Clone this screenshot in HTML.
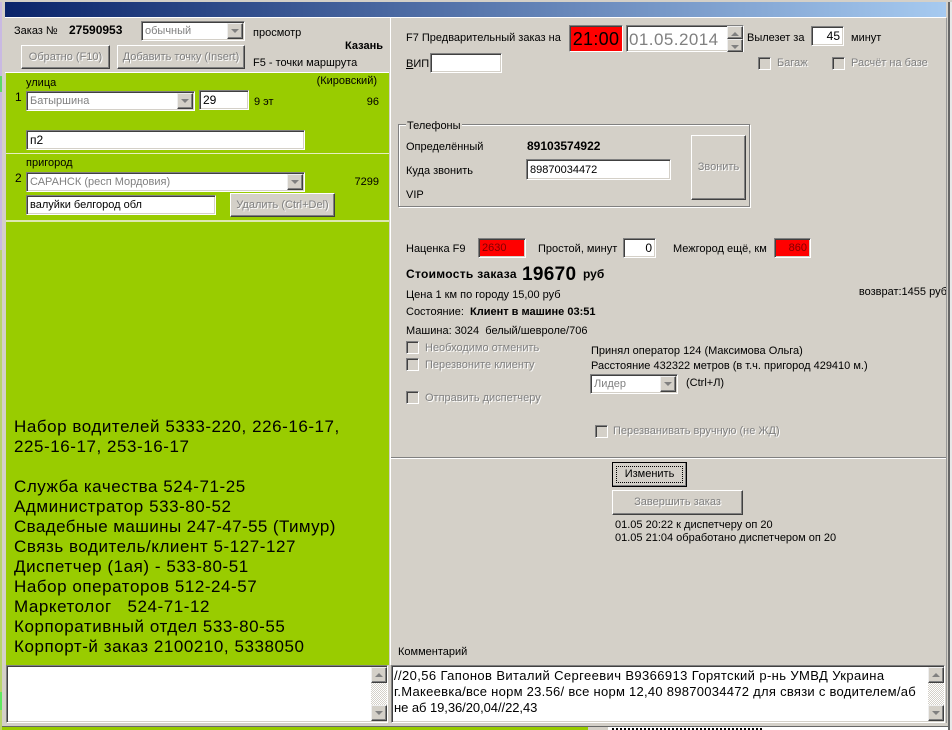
<!DOCTYPE html>
<html><head><meta charset="utf-8"><style>
html,body{margin:0;padding:0}
body{width:952px;height:730px;overflow:hidden;position:relative;background:#d4d0c8;font:11px/13px "Liberation Sans",sans-serif;color:#000}
div,span.t{position:absolute;box-sizing:border-box;white-space:nowrap}
.t{height:13px}
.b{font-weight:bold}
.d{color:#808080;text-shadow:1px 1px 0 #fff}
.s{background:#fff;border:1px solid;border-color:#808080 #fff #fff #808080;box-shadow:inset 1px 1px 0 #404040,inset -1px -1px 0 #d4d0c8;padding:2px 3px;font-size:11px;line-height:14px}
.r{background:#d4d0c8;border:1px solid;border-color:#fff #404040 #404040 #fff;box-shadow:inset -1px -1px 0 #808080;text-align:center}
.g{background:#9c0;}
.ar{background:#d4d0c8;border:1px solid;border-color:#eee #404040 #404040 #eee;box-shadow:inset -1px -1px 0 #808080;width:16px;height:16px}
.ar:after{content:"";position:absolute;left:3px;top:5px;border:4px solid transparent;border-top:4px solid #808080;border-bottom:0}
.ar.u:after{border-top:0;border-bottom:4px solid #808080}
.c{width:13px;height:13px;border:1px solid;border-color:#808080 #fff #fff #808080;box-shadow:inset 1px 1px 0 #404040;background:#d4d0c8}
.big{left:14px;font-size:17px;line-height:20px;height:20px;letter-spacing:.55px}
.sb{background:repeating-conic-gradient(#d4d0c8 0 25%,#fff 0 50%) 0 0/2px 2px}
.cm{left:394px;font-size:13px;line-height:16px;height:16px}
</style></head><body>
<div style="left:0;top:0;width:2px;height:730px;background:#c9b9e2"></div>
<div style="left:0;top:76px;width:2px;height:16px;background:#5fd86a"></div>
<div style="left:0;top:250px;width:2px;height:480px;background:#b9d46a"></div>
<div style="left:0;top:692px;width:2px;height:18px;background:#5fe85f"></div>
<div style="left:950px;top:0;width:2px;height:730px;background:#e8e8e8"></div>
<div style="left:948px;top:0;width:2px;height:730px;background:#666"></div>
<div style="left:0;top:0;width:952px;height:2px;background:#d4d0c8"></div>
<div style="left:5px;top:2px;width:941px;height:15px;background:linear-gradient(90deg,#0a246a,#a6caf0)"></div>
<div style="left:5px;top:17px;width:941px;height:1px;background:#fff"></div>

<!-- left top -->
<span class="t" style="left:14px;top:25px">Заказ №</span>
<span class="t b" style="left:69px;top:24px;font-size:12px">27590953</span>
<div class="s d" style="left:141px;top:21px;width:104px;height:20px;padding-top:2px;text-shadow:none;font-size:11px">обычный<div class="ar" style="right:1px;top:1px"></div></div>
<span class="t" style="left:253px;top:27px">просмотр</span>
<span class="t b" style="right:569px;top:40px">Казань</span>
<div class="r d" style="left:21px;top:45px;width:89px;height:24px;line-height:22px">Обратно (F10)</div>
<div class="r d" style="left:117px;top:45px;width:128px;height:24px;line-height:22px">Добавить точку (Insert)</div>
<span class="t" style="left:253px;top:57px">F5 - точки маршрута</span>
<div style="left:5px;top:72px;width:384px;height:1px;background:#fff"></div>

<!-- green blocks -->
<div class="g" style="left:6px;top:73px;width:383px;height:80px"></div>
<div style="left:6px;top:153px;width:383px;height:1px;background:#e6efc0"></div>
<div class="g" style="left:6px;top:154px;width:383px;height:66px"></div>
<div style="left:6px;top:220px;width:383px;height:2px;background:#dde8b0"></div>
<div class="g" style="left:6px;top:222px;width:383px;height:443px"></div>

<span class="t" style="left:26px;top:77px">улица</span>
<span class="t" style="right:575px;top:75px">(Кировский)</span>
<span class="t" style="left:15px;top:91px;font-size:12px">1</span>
<div class="s d" style="left:26px;top:91px;width:169px;height:20px;text-shadow:none;font-size:11px">Батыршина<div class="ar" style="right:1px;top:1px"></div></div>
<div class="s" style="left:199px;top:90px;width:50px;height:20px;font-size:12px">29</div>
<span class="t" style="left:254px;top:96px">9 эт</span>
<span class="t" style="right:573px;top:96px">96</span>
<div class="s" style="left:26px;top:130px;width:279px;height:20px;font-size:12px">п2</div>

<span class="t" style="left:26px;top:157px">пригород</span>
<span class="t" style="left:15px;top:172px;font-size:12px">2</span>
<div class="s d" style="left:26px;top:172px;width:279px;height:20px;text-shadow:none;font-size:11px">САРАНСК (респ Мордовия)<div class="ar" style="right:1px;top:1px"></div></div>
<span class="t" style="right:573px;top:176px">7299</span>
<div class="s" style="left:26px;top:195px;width:190px;height:20px">валуйки белгород обл</div>
<div class="r d" style="left:230px;top:193px;width:105px;height:24px;line-height:22px">Удалить (Ctrl+Del)</div>

<span class="t big" style="top:417px">Набор водителей 5333-220, 226-16-17,</span>
<span class="t big" style="top:437px">225-16-17, 253-16-17</span>
<span class="t big" style="top:477px">Служба качества 524-71-25</span>
<span class="t big" style="top:497px">Администратор 533-80-52</span>
<span class="t big" style="top:517px;letter-spacing:.4px">Свадебные машины 247-47-55 (Тимур)</span>
<span class="t big" style="top:537px">Связь водитель/клиент 5-127-127</span>
<span class="t big" style="top:557px">Диспетчер (1ая) - 533-80-51</span>
<span class="t big" style="top:577px">Набор операторов 512-24-57</span>
<span class="t big" style="top:597px">Маркетолог &nbsp; 524-71-12</span>
<span class="t big" style="top:617px">Корпоративный отдел 533-80-55</span>
<span class="t big" style="top:637px">Корпорт-й заказ 2100210, 5338050</span>

<div class="s" style="left:6px;top:665px;width:382px;height:58px"></div>
<div class="sb" style="left:371px;top:668px;width:16px;height:52px"></div>
<div class="ar u" style="left:371px;top:667px"></div>
<div class="ar" style="left:371px;top:705px"></div>

<!-- right top -->
<span class="t" style="left:406px;top:32px">F7 Предварительный заказ на</span>
<div style="left:569px;top:25px;width:54px;height:27px;background:#f00;border:1px solid;border-color:#808080 #fff #fff #808080;box-shadow:inset 1px 1px 0 #404040;font-size:18px;line-height:26px;text-align:center;letter-spacing:.3px">21:00</div>
<div class="s" style="left:626px;top:25px;width:118px;height:27px;color:#808080;font-size:17px;line-height:21px;letter-spacing:.45px;padding:3px 2px">01.05.2014</div>
<div class="ar u" style="left:727px;top:26px;height:13px;width:16px"></div>
<div class="ar" style="left:727px;top:39px;height:13px;width:16px"></div>
<span class="t" style="left:747px;top:32px">Вылезет за</span>
<div class="s" style="left:811px;top:26px;width:33px;height:20px;text-align:right;font-size:12px">45</div>
<span class="t" style="left:851px;top:32px">минут</span>
<span class="t" style="left:406px;top:58px"><u>В</u>ИП</span>
<div class="s" style="left:430px;top:53px;width:72px;height:20px"></div>
<div class="c" style="left:758px;top:57px"></div>
<span class="t d" style="left:777px;top:57px">Багаж</span>
<div class="c" style="left:832px;top:57px"></div>
<span class="t d" style="left:851px;top:57px">Расчёт на базе</span>

<!-- phones -->
<div style="left:398px;top:124px;width:352px;height:83px;border:1px solid #808080;box-shadow:inset 1px 1px 0 #fff,1px 1px 0 #fff"></div>
<span class="t" style="left:406px;top:120px;background:#d4d0c8;padding:0 1px 0 1px">Телефоны</span>
<span class="t" style="left:406px;top:141px">Определённый</span>
<span class="t b" style="left:527px;top:140px;font-size:12px">89103574922</span>
<span class="t" style="left:406px;top:165px">Куда звонить</span>
<div class="s" style="left:526px;top:159px;width:145px;height:21px;padding-top:3px">89870034472</div>
<span class="t" style="left:406px;top:189px">VIP</span>
<div class="r d" style="left:691px;top:135px;width:55px;height:65px;line-height:62px">Звонить</div>

<!-- price -->
<span class="t" style="left:406px;top:243px">Наценка F9</span>
<div class="s" style="left:478px;top:238px;width:48px;height:20px;background:#f00;color:#800000;font-size:11px">2630</div>
<span class="t" style="left:538px;top:243px">Простой, минут</span>
<div class="s" style="left:623px;top:238px;width:33px;height:20px;text-align:right;font-size:12px">0</div>
<span class="t" style="left:673px;top:243px">Межгород ещё, км</span>
<div class="s" style="left:774px;top:238px;width:37px;height:20px;background:#f00;color:#800000;text-align:right;font-size:11px">860</div>
<span class="t b" style="left:406px;top:268px;font-size:12px;letter-spacing:.3px">Стоимость заказа</span>
<span class="t b" style="left:522px;top:264px;font-size:19px;line-height:21px;height:21px;letter-spacing:.3px">19670</span>
<span class="t b" style="left:583px;top:268px;font-size:12px">руб</span>
<span class="t" style="left:406px;top:289px">Цена 1 км по городу 15,00 руб</span>
<span class="t" style="right:5px;top:286px">возврат:1455 руб</span>
<span class="t" style="left:406px;top:306px">Состояние:</span>
<span class="t b" style="left:470px;top:306px">Клиент в машине 03:51</span>
<span class="t" style="left:406px;top:325px">Машина: 3024 &nbsp;белый/шевроле/706</span>
<div class="c" style="left:406px;top:341px"></div>
<span class="t d" style="left:425px;top:342px">Необходимо отменить</span>
<div class="c" style="left:406px;top:358px"></div>
<span class="t d" style="left:425px;top:359px">Перезвоните клиенту</span>
<div class="c" style="left:406px;top:391px"></div>
<span class="t d" style="left:425px;top:392px">Отправить диспетчеру</span>
<span class="t" style="left:591px;top:345px">Принял оператор 124 (Максимова Ольга)</span>
<span class="t" style="left:591px;top:360px">Расстояние 432322 метров (в т.ч. пригород 429410 м.)</span>
<div class="s" style="left:590px;top:374px;width:88px;height:20px;color:#808080;font-size:11px">Лидер<div class="ar" style="right:1px;top:1px"></div></div>
<span class="t" style="left:686px;top:377px">(Ctrl+Л)</span>
<div class="c" style="left:595px;top:425px"></div>
<span class="t d" style="left:613px;top:425px">Перезванивать вручную (не ЖД)</span>

<div style="left:390px;top:457px;width:556px;height:1px;background:#808080"></div>
<div style="left:390px;top:458px;width:556px;height:1px;background:#fff"></div>
<div style="left:390px;top:18px;width:1px;height:647px;background:#fff"></div>
<div style="left:946px;top:18px;width:1px;height:705px;background:#999"></div>

<div class="r" style="left:612px;top:462px;width:75px;height:25px;outline:1px solid #000;outline-offset:-1px;line-height:23px"><div style="left:3px;top:3px;right:3px;bottom:3px;border:1px dotted #000"></div>Изменить</div>
<div class="r d" style="left:612px;top:490px;width:131px;height:25px;line-height:23px">Завершить заказ</div>
<span class="t" style="left:615px;top:519px">01.05 20:22 к диспетчеру оп 20</span>
<span class="t" style="left:615px;top:532px">01.05 21:04 обработано диспетчером оп 20</span>
<span class="t" style="left:398px;top:646px">Комментарий</span>

<div class="s" style="left:391px;top:665px;width:554px;height:58px"></div>
<span class="t cm" style="top:668px;letter-spacing:.39px">//20,56 Гапонов Виталий Сергеевич В9366913 Горятский р-нь УМВД Украина</span>
<span class="t cm" style="top:684px;letter-spacing:.27px">г.Макеевка/все норм 23.56/ все норм 12,40 89870034472 для связи с водителем/аб</span>
<span class="t cm" style="top:700px;letter-spacing:-.06px">не аб 19,36/20,04//22,43</span>
<div class="sb" style="left:928px;top:668px;width:16px;height:52px"></div>
<div class="ar u" style="left:928px;top:667px"></div>
<div class="ar" style="left:928px;top:705px"></div>

<!-- bottom -->
<div style="left:2px;top:726px;width:946px;height:1px;background:#666"></div>
<div style="left:2px;top:727px;width:586px;height:3px;background:#9c0"></div>
<div style="left:588px;top:727px;width:360px;height:3px;background:#fff"></div>
<div style="left:588px;top:727px;width:20px;height:3px;background:#d4d0c8"></div>
<div style="left:612px;top:728px;width:150px;height:2px;background:repeating-linear-gradient(90deg,#000 0 2px,#fff 2px 4px)"></div>
</body></html>
